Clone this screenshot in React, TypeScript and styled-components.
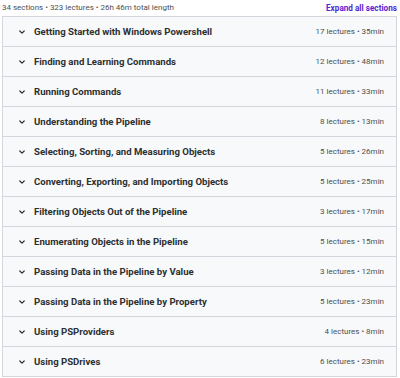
import React from "react";
import styled, { createGlobalStyle } from "styled-components";

const Global = createGlobalStyle`
  html, body { margin: 0; padding: 0; background: #fff; }
  body { font-family: Roboto, "Noto Sans", sans-serif; color: #2d2f31; }
`;

const Page = styled.div`
  width: 400px;
  padding: 0 3px 0 2px;
  box-sizing: border-box;
`;

const Header = styled.div`
  display: flex;
  justify-content: space-between;
  align-items: center;
  height: 16px;
  padding-bottom: 1px;
  box-sizing: border-box;
  font-size: 8px;
`;

const Summary = styled.span`
  color: #4b4f52;
`;

const Expand = styled.button`
  border: 0;
  background: none;
  padding: 0;
  font: inherit;
  font-size: 8.2px;
  font-weight: 700;
  color: #5624d0;
  cursor: pointer;
`;

const List = styled.div`
  border: 1px solid #d1d7dc;
  border-bottom: 0;
`;

const Row = styled.div`
  display: flex;
  align-items: center;
  height: 30px;
  box-sizing: border-box;
  border-bottom: 1px solid #d1d7dc;
  background: #f7f9fa;
  padding: 0 12px 0 15px;
`;

const Chevron = styled.svg`
  width: 8px;
  height: 8px;
  flex: none;
  margin-right: 8px;
`;

const Title = styled.span`
  flex: 1;
  font-size: 9.6px;
  font-weight: 700;
  color: #2d2f31;
`;

const Meta = styled.span`
  font-size: 8px;
  color: #4b4f52;
`;

const sections: [string, string][] = [
  ["Getting Started with Windows Powershell", "17 lectures • 35min"],
  ["Finding and Learning Commands", "12 lectures • 48min"],
  ["Running Commands", "11 lectures • 33min"],
  ["Understanding the Pipeline", "8 lectures • 13min"],
  ["Selecting, Sorting, and Measuring Objects", "5 lectures • 26min"],
  ["Converting, Exporting, and Importing Objects", "5 lectures • 25min"],
  ["Filtering Objects Out of the Pipeline", "3 lectures • 17min"],
  ["Enumerating Objects in the Pipeline", "5 lectures • 15min"],
  ["Passing Data in the Pipeline by Value", "3 lectures • 12min"],
  ["Passing Data in the Pipeline by Property", "5 lectures • 23min"],
  ["Using PSProviders", "4 lectures • 8min"],
  ["Using PSDrives", "6 lectures • 23min"],
];

export default function App() {
  return (
    <Page>
      <Global />
      <Header>
        <Summary>34 sections • 323 lectures • 26h 46m total length</Summary>
        <Expand>Expand all sections</Expand>
      </Header>
      <List>
        {sections.map(([t, m]) => (
          <Row key={t}>
            <Chevron viewBox="0 0 8 8">
              <path d="M1.8 3 L4 5.2 L6.2 3" fill="none" stroke="#2d2f31" strokeWidth="1.2" strokeLinecap="round" strokeLinejoin="round" />
            </Chevron>
            <Title>{t}</Title>
            <Meta>{m}</Meta>
          </Row>
        ))}
      </List>
    </Page>
  );
}
